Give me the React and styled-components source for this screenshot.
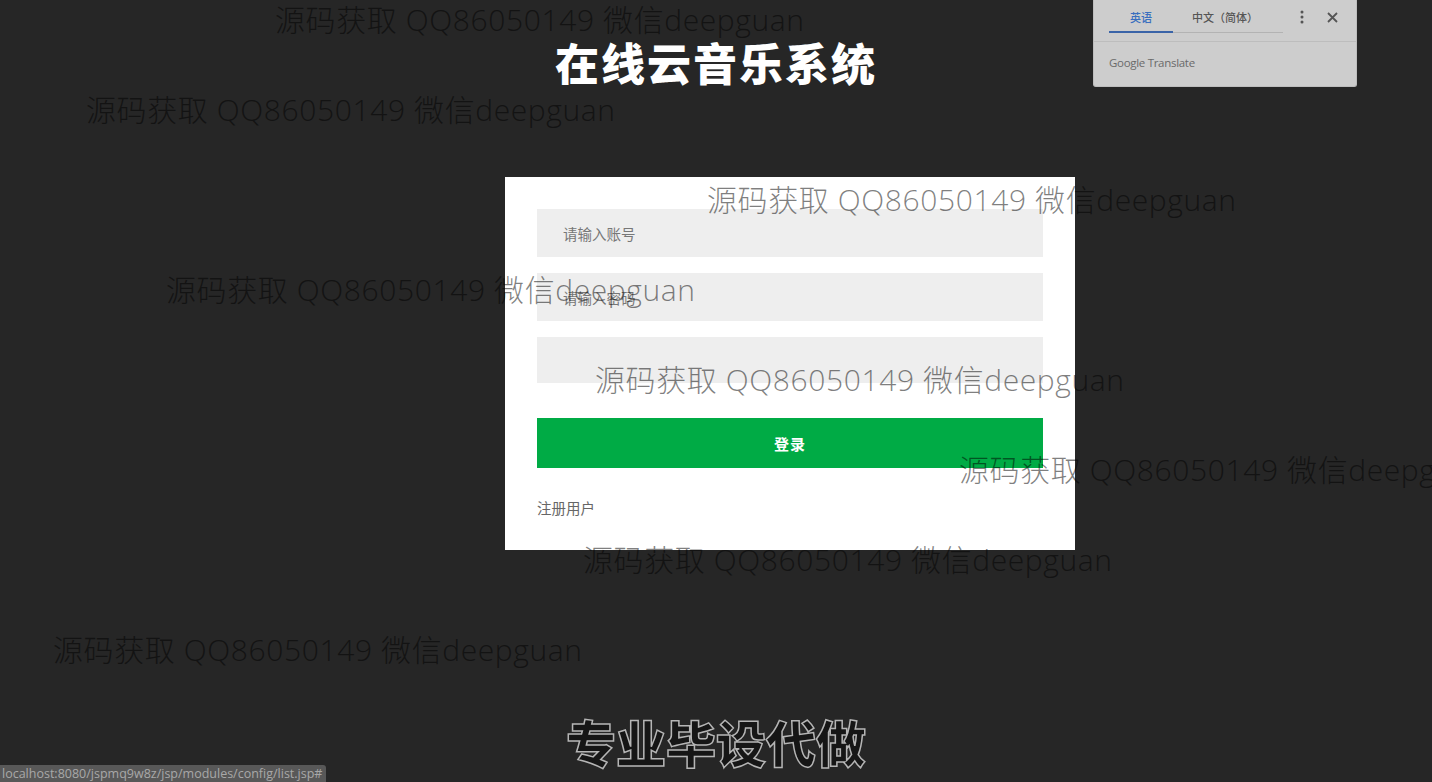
import React from "react";
import styled, { createGlobalStyle } from "styled-components";

const GlobalStyle = createGlobalStyle`
  html, body {
    margin: 0;
    padding: 0;
    background: #262626;
  }
  body {
    font-family: "Noto Sans CJK SC", "Noto Sans", sans-serif;
  }
  * { box-sizing: border-box; }
`;

const marks = [
  { x: 275, y: 0 },
  { x: 86, y: 90 },
  { x: 707, y: 180 },
  { x: 166, y: 270 },
  { x: 595, y: 360 },
  { x: 959, y: 450 },
  { x: 583, y: 540 },
  { x: 53, y: 630 },
];

const Page = styled.div`
  position: relative;
  width: 1432px;
  height: 782px;
  overflow: hidden;
  background: #262626;
  display: flex;
  flex-direction: column;
`;

const Title = styled.h1`
  margin: 35px 0 0 0;
  width: 100%;
  text-align: center;
  white-space: nowrap;
  font-size: 44px;
  line-height: 54px;
  font-weight: 900;
  color: #ffffff;
  letter-spacing: 2px;
`;

const Card = styled.form`
  margin: 88px 0 0 505px;
  width: 570px;
  height: 373px;
  background: #ffffff;
  padding: 32px;
  display: flex;
  flex-direction: column;
`;

const Field = styled.input`
  width: 506px;
  height: ${(p) => p.$h || 48}px;
  margin-bottom: 16px;
  border: none;
  outline: none;
  background: #eeeeee;
  padding: 0 26px;
  font-family: "Noto Sans CJK SC", sans-serif;
  font-size: 14.5px;
  color: #555;
  &::placeholder {
    color: #777777;
  }
`;

const LoginButton = styled.button`
  width: 506px;
  height: 50px;
  margin-top: 19px;
  border: none;
  background: #00ab45;
  color: #ffffff;
  font-family: "Noto Sans CJK SC", sans-serif;
  font-size: 15px;
  font-weight: 700;
  letter-spacing: 1px;
`;

const RegisterLink = styled.a`
  margin-top: 31px;
  font-size: 14.5px;
  line-height: 18px;
  color: #666666;
  text-decoration: none;
`;

const Watermark = styled.div`
  position: absolute;
  white-space: nowrap;
  font-family: "Open Sans", "Noto Sans CJK SC", sans-serif;
  font-weight: 300;
  font-size: 30px;
  line-height: 40px;
  letter-spacing: 0.6px;
  color: rgba(0, 0, 0, 0.5);
  pointer-events: none;
`;

const Caption = styled.div`
  position: absolute;
  left: 0;
  right: 0;
  top: 709px;
  text-align: center;
  font-size: 50px;
  line-height: 64px;
  font-weight: 900;
  color: #161616;
  -webkit-text-stroke: 1.5px #b5b5b5;
`;

const Translate = styled.div`
  position: absolute;
  left: 1093px;
  top: 0;
  width: 264px;
  height: 87px;
  background: #cdcdcd;
  border: 1px solid #bdbdbd;
  border-top: none;
  border-radius: 0 0 3px 3px;
`;

const TabRow = styled.div`
  display: flex;
  align-items: flex-start;
  height: 42px;
  padding: 0 0 0 15px;
  border-bottom: 1px solid #bdbdbd;
`;

const Tabs = styled.div`
  display: flex;
  width: 174px;
  height: 33px;
  border-bottom: 1px solid #b3b3b3;
`;

const Tab = styled.div`
  width: ${(p) => p.$w}px;
  text-align: center;
  font-size: 11px;
  line-height: 34px;
  font-weight: 500;
  color: ${(p) => (p.$active ? "#3a6fbf" : "#555555")};
  border-bottom: ${(p) => (p.$active ? "2px solid #3a64a8" : "none")};
  margin-bottom: -1px;
`;

const IconBtn = styled.div`
  width: 30px;
  height: 34px;
  display: flex;
  align-items: center;
  justify-content: center;
  color: #555;
  margin-left: ${(p) => p.$ml || 0}px;
`;

const Brand = styled.div`
  padding: 13px 0 0 15px;
  font-family: "Open Sans", sans-serif;
  font-size: 11.5px;
  letter-spacing: -0.3px;
  color: #6a6a6a;
`;

const StatusBar = styled.div`
  position: absolute;
  left: 0;
  bottom: 0;
  width: 326px;
  height: 17px;
  background: #585858;
  border-radius: 0 3px 0 0;
  padding: 0 0 0 2px;
  font-family: "Open Sans", sans-serif;
  font-size: 12.5px;
  line-height: 17px;
  color: #a8a8a8;
  white-space: nowrap;
  overflow: hidden;
`;

export default function App() {
  return (
    <Page>
      <GlobalStyle />
      <Title>在线云音乐系统</Title>
      <Card onSubmit={(e) => e.preventDefault()}>
        <Field placeholder="请输入账号" />
        <Field type="password" placeholder="请输入密码" />
        <Field $h={46} />
        <LoginButton type="submit">登录</LoginButton>
        <RegisterLink href="#">注册用户</RegisterLink>
      </Card>

      {marks.map((m, i) => (
        <Watermark key={i} style={{ left: m.x, top: m.y }}>
          源码获取 QQ86050149 微信deepguan
        </Watermark>
      ))}

      <Caption>专业毕设代做</Caption>

      <Translate>
        <TabRow>
          <Tabs>
            <Tab $w={64} $active>英语</Tab>
            <Tab $w={104}>中文（简体）</Tab>
          </Tabs>
          <IconBtn $ml={4}>
            <svg width="4" height="14" viewBox="0 0 4 14">
              <circle cx="2" cy="2" r="1.5" fill="#555" />
              <circle cx="2" cy="7" r="1.5" fill="#555" />
              <circle cx="2" cy="12" r="1.5" fill="#555" />
            </svg>
          </IconBtn>
          <IconBtn>
            <svg width="11" height="11" viewBox="0 0 11 11">
              <path d="M1 1 L10 10 M10 1 L1 10" stroke="#555" strokeWidth="1.8" />
            </svg>
          </IconBtn>
        </TabRow>
        <Brand>Google Translate</Brand>
      </Translate>

      <StatusBar>localhost:8080/jspmq9w8z/jsp/modules/config/list.jsp#</StatusBar>
    </Page>
  );
}
